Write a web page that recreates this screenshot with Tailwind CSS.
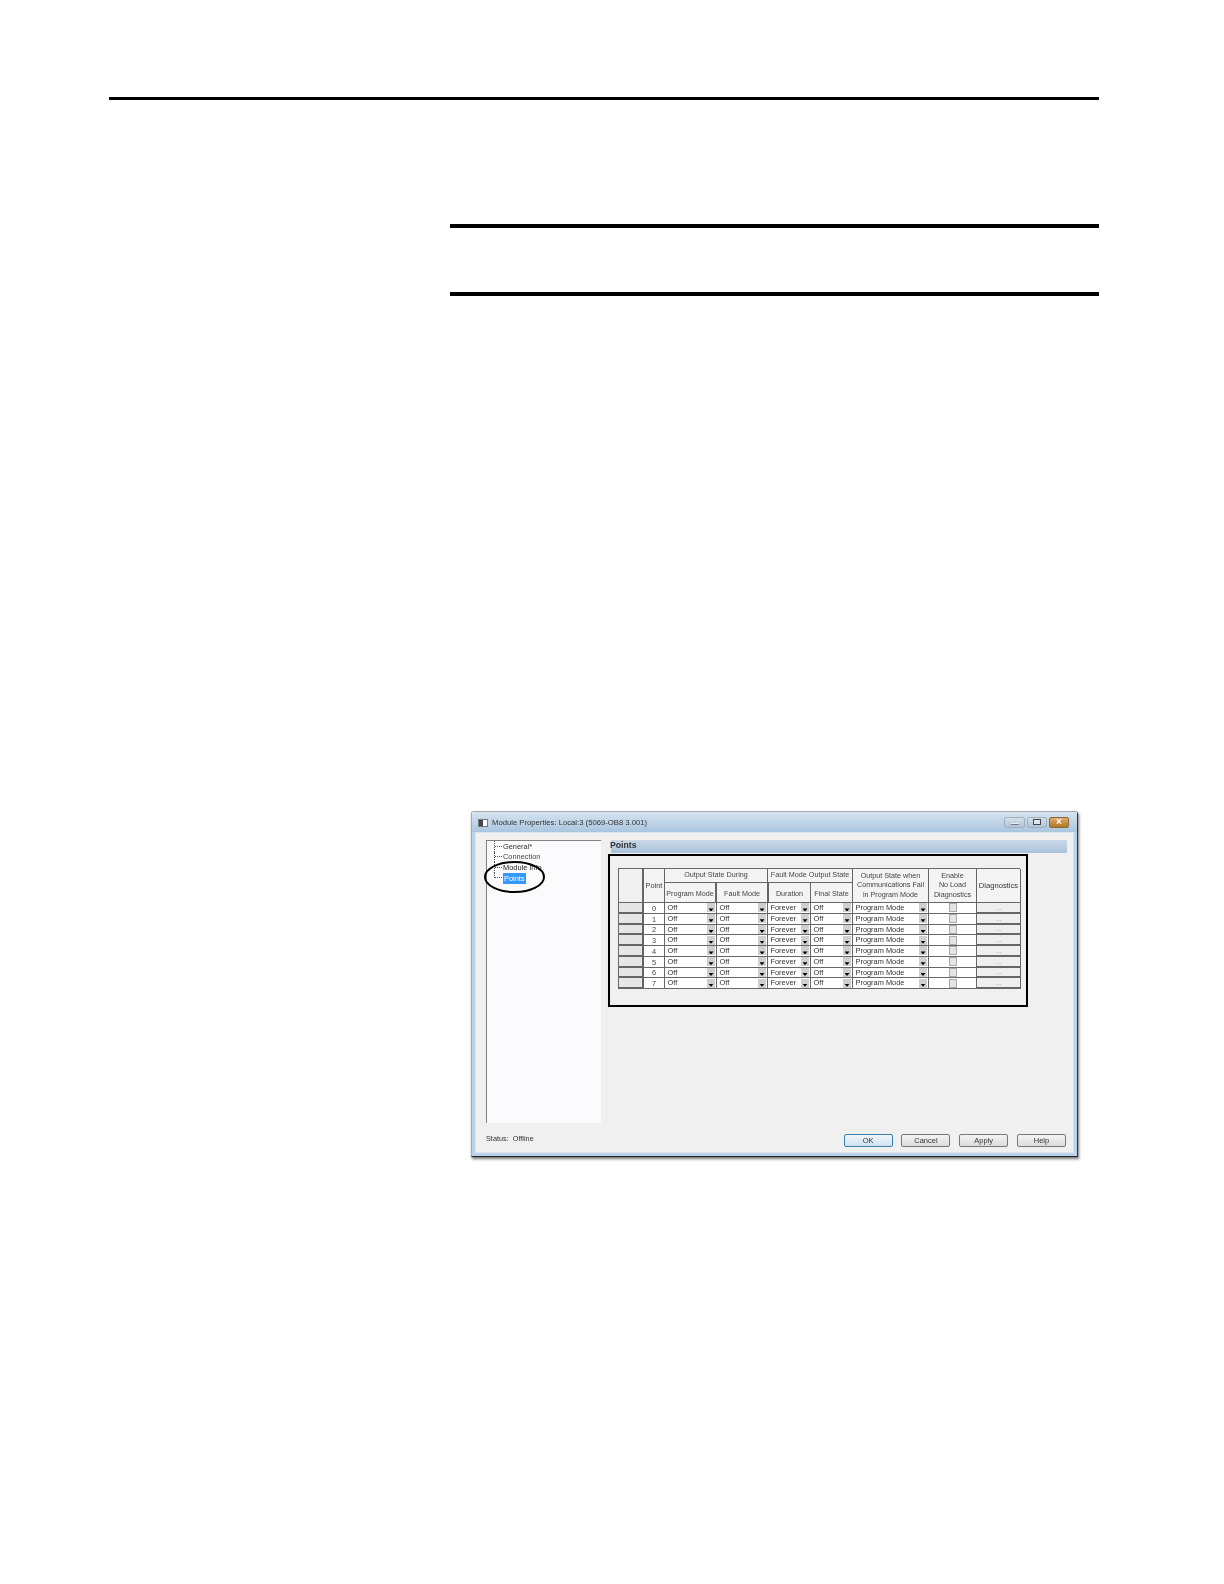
<!DOCTYPE html>
<html lang="en">
<head>
  <meta charset="UTF-8" />
  <title>Module Properties</title>
  <script src="https://cdn.jsdelivr.net/npm/@tailwindcss/browser@4"></script>
</head>
<body class="bg-white min-h-screen font-['Liberation_Sans',Arial,sans-serif]">
  <div class="pt-[97px] pl-[109px] pr-[125px]">
    <!-- page rule -->
    <div class="h-[3px] bg-black"></div>

    <!-- empty callout -->
    <div class="ml-[341px] mt-[124px] h-[72px] border-y-4 border-black"></div>

    <!-- dialog -->
    <div class="ml-[362px] mt-[515px] w-[607px] h-[346px] flex flex-col rounded-t-[3px] border border-[#a8a8a8] border-r-[#333] border-b-[#222] bg-[#b8d3ea] shadow-[1px_2px_3px_rgba(0,0,0,0.55)] blur-[0.45px] text-[#222]">
      <!-- title bar -->
      <div class="h-[20px] shrink-0 flex items-center pl-[6px] pr-[8px] bg-linear-to-b from-[#d6e4f0] to-[#a9c6df]">
        <div class="w-[10px] h-[8px] mt-px border border-[#777] bg-white flex">
          <div class="w-[4px] bg-[#445]"></div>
        </div>
        <div class="ml-[4px] mt-[2px] text-[7.7px] text-[#333]">Module Properties: Local:3 (5069-OB8 3.001)</div>
        <div class="ml-auto flex gap-[2px]">
          <div class="w-[21px] h-[11px] rounded-[2px] border border-[#9fb0c0] bg-linear-to-b from-[#d5e0ea] to-[#b0c3d3] flex items-end justify-center pb-[2px]">
            <div class="w-[8px] h-[2px] bg-[#e8eef4] border-b border-[#778]"></div>
          </div>
          <div class="w-[20px] h-[11px] rounded-[2px] border border-[#9fb0c0] bg-linear-to-b from-[#d5e0ea] to-[#b0c3d3] flex items-center justify-center">
            <div class="w-[8px] h-[6px] border border-[#445] bg-[#dde6ee]"></div>
          </div>
          <div class="w-[20px] h-[11px] rounded-[2px] border border-[#8a6a3a] bg-linear-to-b from-[#e2ab6a] to-[#b07520] flex items-center justify-center text-[10px] leading-none font-bold text-white">×</div>
        </div>
      </div>

      <!-- client area -->
      <div class="flex-1 mx-[3px] mb-[4px] bg-[#f0f0f0] border border-[#d8e4ee] flex flex-col pt-[7px] pl-[10px] pr-[6px]">
        <div class="flex-1 flex gap-[10px] min-h-0">
          <!-- tree -->
          <div class="relative w-[115px] h-[283px] shrink-0 bg-[#fbfbfe] border-l border-t border-[#808080] pl-[7px] text-[7.4px] text-[#444]">
            <div class="flex items-center h-[10.6px] border-l border-dotted border-[#555]">
              <span class="w-[7px] border-b border-dotted border-[#555]"></span><span class="ml-px text-[#333]">General*</span>
            </div>
            <div class="flex items-center h-[10.6px] border-l border-dotted border-[#555]">
              <span class="w-[7px] border-b border-dotted border-[#555]"></span><span class="ml-px">Connection</span>
            </div>
            <div class="flex items-center h-[10.6px] border-l border-dotted border-[#555]">
              <span class="w-[7px] border-b border-dotted border-[#555]"></span><span class="ml-px text-[#222]">Module Info</span>
            </div>
            <div class="flex items-center h-[10.6px]">
              <span class="w-[8px] h-1/2 self-start border-l border-b border-dotted border-[#555]"></span><span class="px-px ml-px bg-[#3399ff] text-white">Points</span>
            </div>
            <svg class="absolute left-[-3px] top-[20px] overflow-visible" width="61" height="32" viewBox="0 0 61 32" fill="none">
              <ellipse cx="30.5" cy="16" rx="29.5" ry="15" stroke="#000" stroke-width="2" />
            </svg>
          </div>

          <!-- points page -->
          <div class="flex-1 min-w-0">
            <div class="h-[13px] pb-px flex items-center bg-linear-to-b from-[#c9d9e8] to-[#a9c3da] text-[8.7px] font-bold text-[#333]"><span class="-ml-px">Points</span></div>
            <div class="-ml-[3px] mt-px w-[420px] h-[153px] border-2 border-black pl-[8px] pt-[12px]">
              <div id="grid" class="grid grid-cols-[25px_21px_52px_51px_43px_42px_76px_48px_44px] grid-rows-[14px_20px_repeat(8,10.75px)] w-[402px] border-l border-t border-[#666] bg-white text-[7.2px] leading-[9.5px] text-[#444] text-center">
                <div class="row-span-2 bg-[#f0f0f0] border-r-2 border-b border-[#666]"></div>
                <div class="row-span-2 bg-[#f4f4f4] border-r border-b border-[#666] flex items-center justify-center text-[7.4px]">Point</div>
                <div class="col-span-2 pb-[2px] bg-[#f4f4f4] border-r border-b border-[#666] flex items-center justify-center">Output State During</div>
                <div class="col-span-2 pb-[2px] bg-[#f4f4f4] border-r border-b border-[#666] flex items-center justify-center whitespace-nowrap">Fault Mode Output State</div>
                <div class="row-span-2 pb-px bg-[#f4f4f4] border-r border-b border-[#666] flex items-center justify-center">Output State when<br />Communications Fail<br />in Program Mode</div>
                <div class="row-span-2 pb-px bg-[#f4f4f4] border-r border-b border-[#666] flex items-center justify-center">Enable<br />No Load<br />Diagnostics</div>
                <div class="row-span-2 bg-[#f4f4f4] border-r border-b border-[#666] flex items-center justify-center text-[7.6px] text-[#333]">Diagnostics</div>
                <div class="pt-[2px] bg-[#f4f4f4] border-r-2 border-b border-[#666] flex items-center justify-center whitespace-nowrap">Program Mode</div>
                <div class="pt-[2px] bg-[#f4f4f4] border-r border-b border-[#666] flex items-center justify-center">Fault Mode</div>
                <div class="pt-[2px] bg-[#f4f4f4] border-r border-b border-[#666] border-l flex items-center justify-center">Duration</div>
                <div class="pt-[2px] bg-[#f4f4f4] border-r border-b border-[#666] flex items-center justify-center">Final State</div>
              </div>
            </div>
          </div>
        </div>

        <!-- status and buttons -->
        <div class="h-[29px] shrink-0 flex items-end pb-[5px] pr-px text-[7.5px] text-[#333]">
          <div class="mr-auto pb-[2px] text-[7.3px]">Status:&nbsp; Offline</div>
          <div class="flex gap-[8.8px]">
            <button class="w-[49px] h-[13px] rounded-[2px] border border-[#3c7fb1] bg-linear-to-b from-[#eef5fa] to-[#cfe2ef] leading-none">OK</button>
            <button class="w-[49px] h-[13px] rounded-[2px] border border-[#777] bg-linear-to-b from-[#f4f4f4] to-[#dcdcdc] leading-none">Cancel</button>
            <button class="w-[49px] h-[13px] rounded-[2px] border border-[#777] bg-linear-to-b from-[#f4f4f4] to-[#dcdcdc] leading-none">Apply</button>
            <button class="w-[49px] h-[13px] rounded-[2px] border border-[#777] bg-linear-to-b from-[#f4f4f4] to-[#dcdcdc] leading-none">Help</button>
          </div>
        </div>
      </div>
    </div>
  </div>

  <script>
    function combo(text) {
      return `<div class="relative flex items-center justify-between pl-[2.5px] pr-[1px] bg-white border-b border-r border-[#666] text-left text-[7.4px] text-[#333]">
        <span>${text}</span>
        <span class="w-[8px] h-[9px] bg-[#cfcfcf] flex items-end justify-center pb-px"><span class="w-[5px] h-[3px] bg-black [clip-path:polygon(0_0,100%_0,50%_100%)]"></span></span>
      </div>`;
    }

    const rows = [0, 1, 2, 3, 4, 5, 6, 7].map(n => `
      <div class="bg-[#e6e6e6] border-r-2 border-b-2 border-[#666]"></div>
      <div class="bg-white border-r border-b border-[#666] flex items-end justify-center leading-[8px] text-[7.4px]">${n}</div>
      ${combo('Off')}${combo('Off')}${combo('Forever')}${combo('Off')}${combo('Program Mode')}
      <div class="bg-white border-r border-b border-[#666] flex items-center justify-center"><span class="w-[8px] h-[9px] border border-[#aaa] bg-[#e4e4e4]"></span></div>
      <div class="bg-[#eeeeee] border-r border-b-2 border-[#666] flex items-center justify-center text-[#999] leading-none">...</div>`).join('');

    document.getElementById('grid').insertAdjacentHTML('beforeend', rows);
  </script>
</body>
</html>
